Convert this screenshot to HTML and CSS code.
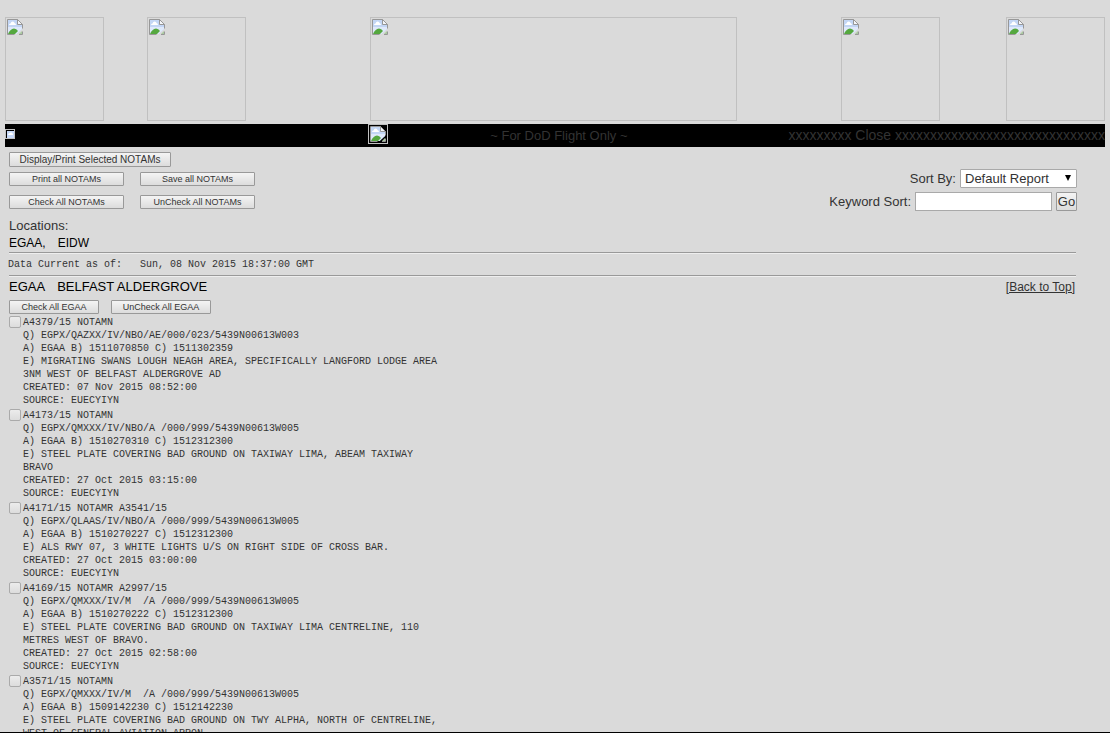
FILE: index.html
```html
<!DOCTYPE html>
<html lang="en">
<head>
<meta charset="utf-8">
<title>NOTAMs</title>
<link rel="stylesheet" href="styles.css">
</head>
<body>
<svg class="defs" aria-hidden="true">
  <symbol id="broken" viewBox="0 0 16 16">
    <path d="M1 1h9.500l4.500 4.500v4.500l-5.500 5h-8.500z" fill="#c3d6f5"/>
    <path d="M1 8h14v2l-5.500 5h-8.500z" fill="#dfe9fb"/>
    <path d="M2 6q0-1.500 1.500-1.500q.5-2 2.200-2q1.600 0 2 1.700q1.300.1 1.300 1.800z" fill="#fff"/>
    <path d="M1 15q2-5 6-5.500q2.500 0 4 2.500l-3 3z" fill="#55a83f"/>
    <path d="M12 15l3-3v3z" fill="#a9c9a0"/>
    <path d="M.5 15.500v-15h10l5 5v4M.5 15.500h7M12 15.500h3.500v-3" fill="none" stroke="#979797"/>
    <path d="M10.500.5v5h5z" fill="#f4f6fa" stroke="#979797"/>
  </symbol>
</svg>
<div class="page" id="top">
  <header class="banner">
    <div class="frame"><svg class="icon"><use href="#broken"/></svg></div>
    <div class="frame"><svg class="icon"><use href="#broken"/></svg></div>
    <div class="frame frame-wide"><svg class="icon"><use href="#broken"/></svg></div>
    <div class="frame"><svg class="icon"><use href="#broken"/></svg></div>
    <div class="frame"><svg class="icon"><use href="#broken"/></svg></div>
  </header>
  <div class="bar">
    <svg class="bar-mini" viewBox="0 0 10 10"><path d="M0 0h10v10H0z" fill="#c0c0c0"/><path d="M1 1h8v8H1z" fill="#000"/><path d="M2 2h7v7H2z" fill="#c6d8f7"/><path d="M3 6q0-2 2-2q1-1.500 2 0q1 0 1 2z" fill="#fff"/></svg>
    <div class="bar-frame"><svg class="icon"><use href="#broken"/></svg></div>
    <span class="bar-note">~ For DoD Flight Only ~</span>
    <span class="bar-close">xxxxxxxxx Close xxxxxxxxxxxxxxxxxxxxxxxxxxxxxx</span>
  </div>
  <main class="content">
    <div class="tools">
      <div class="actions">
        <button class="btn btn-main">Display/Print Selected NOTAMs</button>
        <div class="pair"><button class="btn btn-all">Print all NOTAMs</button><button class="btn btn-all">Save all NOTAMs</button></div>
        <div class="pair pair-last"><button class="btn btn-all">Check All NOTAMs</button><button class="btn btn-all">UnCheck All NOTAMs</button></div>
      </div>
      <form class="sorting">
        <div class="field"><label for="sort">Sort By:</label><span class="picker"><select id="sort"><option>Default Report</option></select></span></div>
        <div class="field"><label for="keyword">Keyword Sort:</label><input id="keyword" class="keyword" type="text"><button class="btn btn-go" type="button">Go</button></div>
      </form>
    </div>
    <div class="label">Locations:</div>
    <div class="codes">EGAA,<span class="next">EIDW</span></div>
    <hr class="rule">
    <pre class="current">Data Current as of:   Sun, 08 Nov 2015 18:37:00 GMT</pre>
    <hr class="rule">
    <div class="place"><h1 class="place-name">EGAA<span class="next">BELFAST ALDERGROVE</span></h1><a class="back" href="#top">[Back to Top]</a></div>
    <div class="place-actions"><button class="btn btn-check">Check All EGAA</button><button class="btn btn-uncheck">UnCheck All EGAA</button></div>
    <div class="notam"><input class="tick" type="checkbox" id="n1"><label for="n1"><pre>A4379/15 NOTAMN
Q) EGPX/QAZXX/IV/NBO/AE/000/023/5439N00613W003
A) EGAA B) 1511070850 C) 1511302359
E) MIGRATING SWANS LOUGH NEAGH AREA, SPECIFICALLY LANGFORD LODGE AREA
3NM WEST OF BELFAST ALDERGROVE AD
CREATED: 07 Nov 2015 08:52:00
SOURCE: EUECYIYN</pre></label></div>
    <div class="notam"><input class="tick" type="checkbox" id="n2"><label for="n2"><pre>A4173/15 NOTAMN
Q) EGPX/QMXXX/IV/NBO/A /000/999/5439N00613W005
A) EGAA B) 1510270310 C) 1512312300
E) STEEL PLATE COVERING BAD GROUND ON TAXIWAY LIMA, ABEAM TAXIWAY
BRAVO
CREATED: 27 Oct 2015 03:15:00
SOURCE: EUECYIYN</pre></label></div>
    <div class="notam"><input class="tick" type="checkbox" id="n3"><label for="n3"><pre>A4171/15 NOTAMR A3541/15
Q) EGPX/QLAAS/IV/NBO/A /000/999/5439N00613W005
A) EGAA B) 1510270227 C) 1512312300
E) ALS RWY 07, 3 WHITE LIGHTS U/S ON RIGHT SIDE OF CROSS BAR.
CREATED: 27 Oct 2015 03:00:00
SOURCE: EUECYIYN</pre></label></div>
    <div class="notam"><input class="tick" type="checkbox" id="n4"><label for="n4"><pre>A4169/15 NOTAMR A2997/15
Q) EGPX/QMXXX/IV/M  /A /000/999/5439N00613W005
A) EGAA B) 1510270222 C) 1512312300
E) STEEL PLATE COVERING BAD GROUND ON TAXIWAY LIMA CENTRELINE, 110
METRES WEST OF BRAVO.
CREATED: 27 Oct 2015 02:58:00
SOURCE: EUECYIYN</pre></label></div>
    <div class="notam"><input class="tick" type="checkbox" id="n5"><label for="n5"><pre>A3571/15 NOTAMN
Q) EGPX/QMXXX/IV/M  /A /000/999/5439N00613W005
A) EGAA B) 1509142230 C) 1512142230
E) STEEL PLATE COVERING BAD GROUND ON TWY ALPHA, NORTH OF CENTRELINE,
WEST OF GENERAL AVIATION APRON.</pre></label></div>
  </main>
</div>
</body>
</html>
```

FILE: styles.css
```css
* { box-sizing: border-box; }
body {
  margin: 0;
  height: 100vh;
  overflow: hidden;
  background: #dadada;
  border-bottom: 1px solid #000;
  color: #333;
  font: 13px/16px "Liberation Sans", Arial, sans-serif;
}
.defs { position: absolute; width: 0; height: 0; }
.page { height: 100%; overflow: hidden; padding: 17px 5px 0; }
.banner {
  display: grid;
  grid-template-columns: 142fr 223fr 471fr 165fr 99px;
}
.frame { width: 99px; height: 104px; border: 1px solid #c0c0c0; padding: 1px; }
.frame-wide { width: 78%; }
.icon { display: block; width: 16px; height: 16px; }
.bar {
  display: grid;
  grid-template-columns: 363fr 122fr 298fr auto;
  height: 23px;
  margin-top: 3px;
  background: #000;
  line-height: 23px;
}
.bar-mini { width: 10px; height: 10px; margin-top: 5px; }
.bar-frame { width: 20px; height: 20px; border: 1px solid #c0c0c0; padding: 1px; }
.bar-close { font-size: 14px; }
.content { padding: 5px 29px 0 4px; }
.tools { display: flex; justify-content: space-between; }
.actions { display: flex; flex-direction: column; align-items: flex-start; gap: 5px; }
.pair { display: flex; gap: 16px; }
.pair-last { margin-top: 4px; }
.btn {
  height: 14px;
  padding: 0;
  border: 1px solid #999;
  border-radius: 1px;
  background: linear-gradient(#f4f4f4, #dcdcdc);
  color: #333;
  font: 9px/12px "Liberation Sans", Arial, sans-serif;
  white-space: nowrap;
}
.btn-main { width: 162px; height: 15px; font-size: 10px; }
.btn-all { width: 115px; }
.btn-check { width: 90px; }
.btn-uncheck { width: 100px; }
.btn-go { width: 21px; height: 19px; font-size: 13px; }
.sorting { display: flex; flex-direction: column; align-items: flex-end; gap: 4px; padding-top: 17px; margin-right: -1px; }
.field { display: flex; align-items: center; gap: 4px; }
.picker { position: relative; display: flex; }
.picker::after {
  content: "";
  position: absolute;
  right: 6px;
  top: 6px;
  border: 3px solid transparent;
  border-top: 6px solid #000;
  border-bottom: 0;
  pointer-events: none;
}
.picker select {
  appearance: none;
  width: 117px;
  height: 19px;
  padding: 0 4px;
  border: 1px solid #a9a9a9;
  border-radius: 1px;
  background: #fff;
  color: #333;
  font: inherit;
}
.keyword { width: 137px; height: 19px; padding: 0 2px; border: 1px solid #a9a9a9; background: #fff; font: inherit; }
.label { margin-top: 7px; }
.codes { margin-top: 1px; color: #000; font-size: 12px; }
.next { margin-left: 12px; }
.rule { height: 2px; margin: 1px 0 0; border: 0; border-top: 1px solid #999; background: #eee; }
pre { margin: 0; font: 10px/13px "Liberation Mono", "Courier New", monospace; }
.current { padding: 4px 0 3px; margin-left: -1px; }
.place { display: flex; justify-content: space-between; align-items: center; height: 20px; padding-right: 1px; }
.place-name { margin: 0; color: #000; font-size: 13px; font-weight: normal; }
.back { color: #333; font-size: 12px; }
.place-actions { display: flex; gap: 12px; margin: 3px 0 2px; }
.notam { display: flex; align-items: flex-start; gap: 2px; margin-bottom: 2px; }
.tick {
  appearance: none;
  flex: none;
  width: 12px;
  height: 12px;
  margin: 0;
  border: 1px solid #aaa;
  border-radius: 2px;
  background: linear-gradient(#ececec, #dcdcdc);
}
```
